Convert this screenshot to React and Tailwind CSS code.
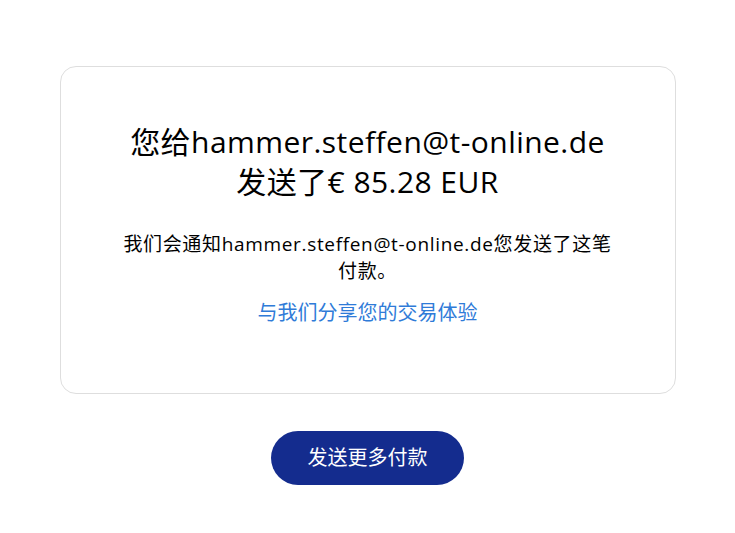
import React from "react";

const font = { fontFamily: '"Open Sans", "Noto Sans CJK SC", sans-serif' };

export default function App() {
  return (
    <div className="min-h-screen bg-white flex flex-col items-center pt-[66px] text-black" style={font}>
      {/* Confirmation card */}
      <section className="w-[616px] h-[328px] rounded-2xl border border-[#dedede] flex flex-col items-center pt-[55px]">
        <h1 className="text-[30px] leading-[40px] tracking-[0.015em] text-center">
          您给hammer.steffen@t-online.de
          <br />
          发送了€ 85.28 EUR
        </h1>
        <p className="w-[500px] mt-[29px] text-[19px] leading-[27px] tracking-[0.035em] text-center">
          我们会通知hammer.steffen@t-online.de您发送了这笔付款。
        </p>
        <a href="#" className="mt-[14px] text-[20px] leading-[28px] text-[#2f7bd8]">
          与我们分享您的交易体验
        </a>
      </section>

      {/* Send again */}
      <button className="mt-[37px] w-[193px] h-[54px] rounded-full bg-[#142c8e] text-white text-[20px]">
        发送更多付款
      </button>
    </div>
  );
}
